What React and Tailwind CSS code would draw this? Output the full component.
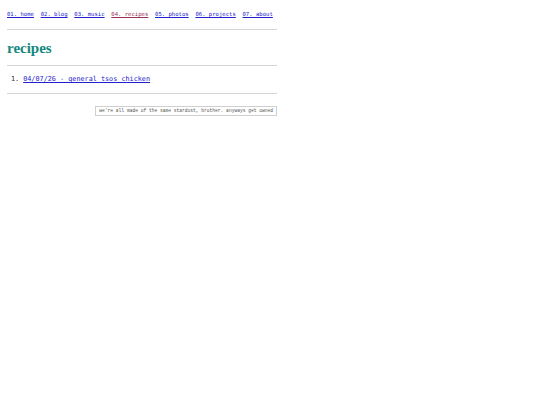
export default function App() {
  const links = ["01. home", "02. blog", "03. music", "04. recipes", "05. photos", "06. projects", "07. about"];
  return (
    <div className="bg-white min-h-[405px] w-[540px]">
      <div className="ml-[7px] w-[270px] pt-[10px]">
        <nav className="flex gap-[6.7px] text-[5.6px] leading-[8px]" style={{ fontFamily: '"DejaVu Sans Mono", monospace' }}>
          {links.map((l) => (
            <a key={l} href="#" className={l === "04. recipes" ? "text-[#993355] underline" : "text-[#2222cc] underline"}>{l}</a>
          ))}
        </nav>
        <div className="mt-[11px] h-px bg-[#d6d6d6]" />
        <h1 className="mt-[10px] text-[#14877f] font-bold text-[15px] leading-[16px]" style={{ fontFamily: '"Liberation Serif", serif' }}>recipes</h1>
        <div className="mt-[9px] h-px bg-[#d6d6d6]" />
        <ol className="mt-[9px] pl-[4px] text-[6.8px] leading-[9px]" style={{ fontFamily: '"DejaVu Sans Mono", monospace' }}>
          <li className="flex gap-[4px]"><span className="text-[#333]">1.</span><a href="#" className="text-[#2222cc] underline">04/07/26 - general tsos chicken</a></li>
        </ol>
        <div className="mt-[9px] h-px bg-[#d6d6d6]" />
        <div className="flex justify-end mt-[12px]">
          <div className="border border-[#cfcfcf] px-[3px] h-[10px] flex items-center text-[4.6px] text-[#555] whitespace-nowrap" style={{ fontFamily: '"Liberation Mono", monospace' }}>
            we're all made of the same stardust, brother. anyways get owned
          </div>
        </div>
      </div>
    </div>
  );
}
